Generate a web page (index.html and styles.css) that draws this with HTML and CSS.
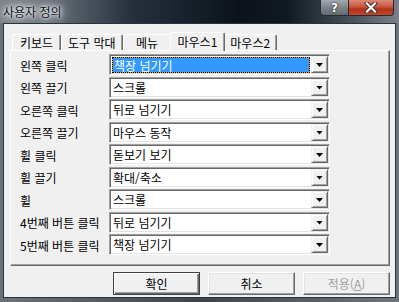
FILE: index.html
```html
<!DOCTYPE html>
<html lang="ko">
<head>
  <meta charset="UTF-8" />
  <title>사용자 정의</title>
  <link rel="stylesheet" href="styles.css">
</head>
<body>
  <div class="window">
    <div class="titlebar">
      <span class="title">사용자 정의</span>
      <div class="caption">
        <span class="cap-btn help">?</span>
        <span class="cap-btn close">
          <svg width="14" height="11" viewBox="0 0 14 11">
            <path d="M3 1.5 L11 9.5 M11 1.5 L3 9.5" stroke="#3a2a28" stroke-width="4" stroke-linecap="square"/>
            <path d="M3 1.5 L11 9.5 M11 1.5 L3 9.5" stroke="#fff" stroke-width="2.2" stroke-linecap="square"/>
          </svg>
        </span>
      </div>
    </div>

    <div class="client">
      <div class="tabs">
        <div class="tab">키보드</div>
        <div class="tab">도구 막대</div>
        <div class="tab">메뉴</div>
        <div class="tab active">마우스1</div>
        <div class="tab">마우스2</div>
      </div>

      <div class="pane">
        <div class="form">
          <label>왼쪽 클릭</label>
          <div class="combo"><span class="value sel">책장 넘기기</span><span class="drop"></span></div>
          <label>왼쪽 끌기</label>
          <div class="combo"><span class="value">스크롤</span><span class="drop"></span></div>
          <label>오른쪽 클릭</label>
          <div class="combo"><span class="value">뒤로 넘기기</span><span class="drop"></span></div>
          <label>오른쪽 끌기</label>
          <div class="combo"><span class="value">마우스 동작</span><span class="drop"></span></div>
          <label>휠 클릭</label>
          <div class="combo"><span class="value">돋보기 보기</span><span class="drop"></span></div>
          <label>휠 끌기</label>
          <div class="combo"><span class="value">확대/축소</span><span class="drop"></span></div>
          <label>휠</label>
          <div class="combo"><span class="value">스크롤</span><span class="drop"></span></div>
          <label>4번째 버튼 클릭</label>
          <div class="combo"><span class="value">뒤로 넘기기</span><span class="drop"></span></div>
          <label>5번째 버튼 클릭</label>
          <div class="combo"><span class="value">책장 넘기기</span><span class="drop"></span></div>
        </div>
      </div>

      <div class="buttons">
        <button class="btn default">확인</button>
        <button class="btn">취소</button>
        <button class="btn" disabled>적용(<u>A</u>)</button>
      </div>
    </div>
  </div>
</body>
</html>
```

FILE: styles.css
```css
* {
  box-sizing: border-box;
}
body {
  margin: 0;
  font-family: "Noto Sans CJK KR", "Noto Sans", sans-serif;
  font-size: 12px;
  color: #000;
}
.window {
  width: 399px;
  height: 302px;
  display: flex;
  flex-direction: column;
  background: linear-gradient(90deg, #6b727a, #3c434b 50%, #6e757d);
}

/* title bar */
.titlebar {
  height: 23px;
  flex: none;
  display: flex;
  align-items: flex-start;
  background: linear-gradient(90deg, #7c838b 0%, #6a727a 12%, #26303c 33%, #0b121b 60%, #111923 72%, #48505a 88%, #7a8189 100%);
}
.title {
  padding: 4px 0 0 3px;
  line-height: 15px;
  font-size: 12px;
  color: #0c1220;
  text-shadow: 0 0 3px #fff, 0 0 6px #fff, 0 0 10px rgba(255,255,255,0.9), 0 0 16px rgba(255,255,255,0.7);
}
.caption {
  margin-left: auto;
  margin-right: 5px;
  display: flex;
}
.cap-btn {
  height: 16px;
  display: flex;
  align-items: center;
  justify-content: center;
  border: 1px solid #262b32;
  border-top: none;
}
.help {
  width: 29px;
  border-radius: 0 0 0 4px;
  background: linear-gradient(#a3a9af, #7d848b 50%, #626a72);
  color: #fff;
  font-family: "DejaVu Sans", sans-serif;
  font-weight: bold;
  font-size: 12px;
  text-shadow: 0 0 1px #222, 0 0 2px #222;
}
.close {
  width: 45px;
  border-left: none;
  border-radius: 0 0 4px 0;
  background: linear-gradient(#dc8a76, #c9563e 45%, #b1311a 60%, #c0472c);
}

/* client area */
.client {
  flex: 1;
  margin: 0 3px 4px;
  background: #f0f0f0;
  border: 1px solid #2c333b;
  padding: 8px 5px 2px 6px;
  display: flex;
  flex-direction: column;
}

/* tabs */
.tabs {
  height: 18px;
  flex: none;
  display: flex;
  align-items: flex-end;
  padding-left: 2px;
}
.tab {
  height: 16px;
  min-width: 49px;
  padding: 0 6px;
  text-align: center;
  line-height: 15px;
  background: #f0f0f0;
  border: 1px solid;
  border-bottom: none;
  border-color: #fff #696969 #fff #fff;
  border-radius: 2px 2px 0 0;
  box-shadow: inset -1px 0 #a0a0a0;
}
.tab.active {
  position: relative;
  z-index: 1;
  height: 19px;
  margin: 0 -2px -1px;
  padding: 0 7px;
  line-height: 17px;
}

/* tab page */
.pane {
  height: 216px;
  flex: none;
  border: 1px solid;
  border-color: #fff #696969 #696969 #fff;
  box-shadow: inset -1px -1px #a0a0a0;
  padding: 3px 0 0 9px;
}
.form {
  display: grid;
  grid-template-columns: 89px 221px;
  row-gap: 1.5px;
}
.form label {
  height: 21px;
  display: flex;
  align-items: center;
  padding-top: 1px;
  white-space: nowrap;
}
.combo {
  height: 21px;
  display: flex;
  padding: 1px;
  background: #fff;
  border: 1px solid;
  border-color: #a0a0a0 #fff #fff #a0a0a0;
  box-shadow: inset 1px 1px #696969, inset -1px -1px #e3e3e3;
}
.value {
  flex: 1;
  display: flex;
  align-items: center;
  padding-left: 2px;
  white-space: nowrap;
}
.value.sel {
  margin: 1px 1px 0;
  padding-left: 1px;
  color: #fff;
  border: 1px dotted #000;
  background: linear-gradient(#3399ff, #3399ff) padding-box, #e8a040;
}
.drop {
  width: 17px;
  height: 17px;
  flex: none;
  display: flex;
  align-items: center;
  justify-content: center;
  padding-top: 1px;
  background: #f0f0f0;
  border: 1px solid;
  border-color: #f0f0f0 #696969 #696969 #f0f0f0;
  box-shadow: inset 1px 1px #fff, inset -1px -1px #a0a0a0;
}
.drop::after {
  content: "";
  width: 7px;
  height: 4px;
  background: #000;
  clip-path: polygon(0 0, 100% 0, 50% 100%);
}

/* dialog buttons */
.buttons {
  display: flex;
  justify-content: flex-end;
  gap: 8px;
  margin-top: 6px;
}
.btn {
  width: 87px;
  height: 23px;
  padding: 0;
  font-family: inherit;
  font-size: 12px;
  color: #000;
  background: #f0f0f0;
  border: 1px solid;
  border-color: #fff #696969 #696969 #fff;
  box-shadow: inset -1px -1px #a0a0a0, inset 1px 1px #e3e3e3;
}
.btn.default {
  border-color: #404040;
  box-shadow: inset 1px 1px #fff, inset -1px -1px #696969, inset -2px -2px #a0a0a0;
}
.btn:disabled {
  color: #a0a0a0;
}
```
